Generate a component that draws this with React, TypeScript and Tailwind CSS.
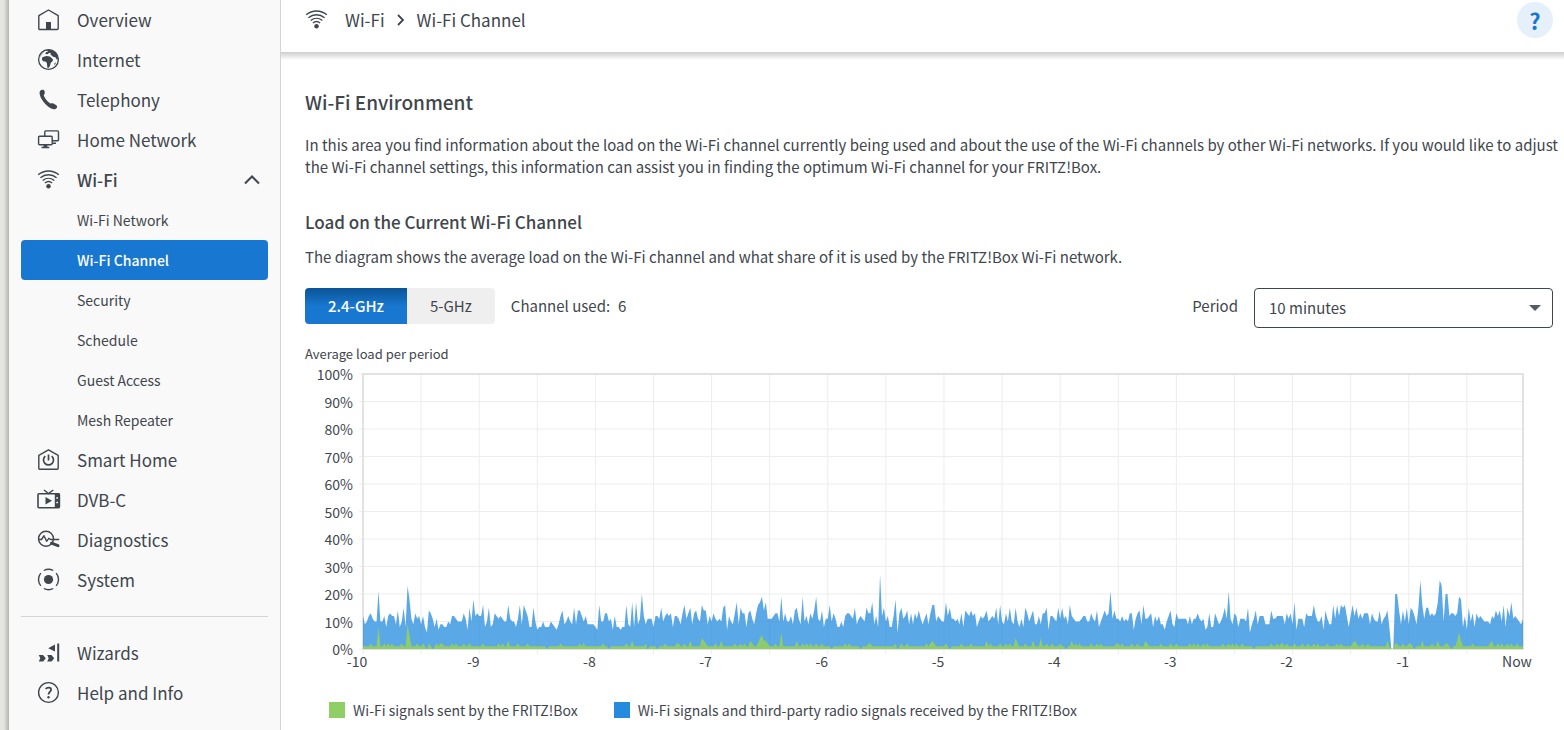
import { useState, type ReactNode } from "react";
import clsx from "clsx";

// Total channel load in percent, one row per minute
const received = [
  [12, 9, 10, 12, 13, 11, 10, 10, 21, 10, 10, 12, 8, 12, 13, 12, 12, 9, 14, 8, 10, 15, 8, 23, 18, 11, 9, 13, 11, 12, 9, 12, 8, 6, 14, 13, 11, 8, 11, 7, 9, 9, 8, 8, 10, 9, 12, 12, 11, 10, 10, 10, 13, 11, 7, 15, 10, 18, 12, 13],
  [12, 12, 16, 8, 10, 15, 8, 9, 13, 12, 11, 12, 11, 10, 10, 16, 11, 10, 10, 8, 11, 16, 9, 16, 14, 12, 8, 8, 15, 10, 7, 8, 8, 10, 8, 8, 8, 10, 9, 8, 7, 9, 12, 14, 9, 10, 12, 10, 9, 15, 9, 14, 14, 12, 10, 12, 9, 9, 9, 9],
  [8, 7, 16, 10, 10, 13, 13, 10, 11, 7, 12, 8, 8, 7, 8, 8, 16, 9, 8, 17, 8, 17, 9, 11, 20, 12, 9, 11, 11, 11, 8, 12, 12, 11, 15, 10, 12, 13, 12, 13, 8, 12, 12, 11, 9, 13, 16, 11, 13, 15, 9, 13, 14, 11, 10, 16, 14, 14, 9, 12],
  [10, 13, 11, 10, 11, 10, 15, 16, 7, 12, 10, 9, 13, 17, 9, 15, 13, 13, 8, 13, 14, 11, 9, 13, 16, 17, 19, 14, 17, 11, 11, 11, 12, 13, 13, 10, 19, 10, 13, 10, 10, 12, 9, 14, 15, 11, 9, 19, 10, 12, 9, 13, 11, 14, 19, 11, 10, 14, 8, 11],
  [11, 16, 10, 13, 11, 8, 8, 10, 8, 12, 13, 13, 12, 11, 15, 9, 11, 12, 11, 10, 15, 13, 13, 17, 9, 12, 8, 27, 12, 15, 10, 12, 8, 8, 12, 18, 6, 13, 15, 11, 12, 14, 9, 13, 9, 13, 11, 14, 11, 9, 11, 13, 9, 13, 16, 16, 10, 12, 11, 10],
  [10, 17, 12, 15, 11, 11, 10, 11, 9, 13, 8, 14, 13, 12, 14, 12, 13, 8, 10, 12, 11, 12, 14, 10, 11, 12, 11, 15, 9, 16, 10, 9, 13, 10, 15, 10, 9, 15, 10, 8, 11, 8, 15, 13, 10, 12, 14, 9, 9, 12, 9, 13, 13, 15, 7, 12, 12, 11, 10, 15],
  [11, 15, 11, 12, 9, 16, 12, 11, 10, 10, 10, 11, 12, 12, 10, 10, 13, 11, 10, 14, 8, 10, 12, 14, 12, 13, 21, 11, 14, 11, 11, 10, 12, 10, 11, 10, 13, 13, 7, 11, 13, 14, 9, 16, 11, 11, 12, 13, 8, 12, 10, 12, 9, 9, 7, 10, 12, 14, 9, 8],
  [13, 11, 11, 11, 11, 11, 9, 12, 9, 11, 11, 13, 11, 10, 11, 7, 8, 13, 8, 8, 13, 11, 9, 10, 12, 15, 11, 21, 11, 9, 13, 12, 8, 11, 11, 11, 10, 15, 6, 9, 11, 14, 9, 12, 12, 12, 9, 9, 9, 14, 11, 11, 12, 12, 12, 12, 9, 13, 11, 13],
  [9, 17, 7, 11, 11, 11, 8, 13, 12, 12, 12, 16, 12, 10, 10, 12, 7, 14, 11, 9, 9, 16, 11, 16, 12, 16, 15, 16, 12, 8, 12, 16, 12, 15, 11, 13, 11, 13, 13, 13, 9, 13, 11, 10, 10, 14, 9, 11, 12, 14, 8, 0, 0, 20, 20, 14, 9, 14, 10, 15],
  [9, 15, 14, 12, 9, 15, 25, 16, 11, 15, 15, 12, 13, 12, 13, 17, 25, 23, 10, 20, 20, 12, 13, 13, 12, 13, 19, 18, 8, 12, 7, 15, 10, 13, 8, 13, 11, 12, 11, 10, 10, 10, 9, 12, 11, 14, 12, 14, 10, 16, 8, 15, 12, 17, 11, 12, 11, 10, 9, 11],
].flat();

// Seconds in which the box itself sent more than its idle 1%
const sentPeaks: Record<number, number> = {
  8: 8, 23: 9, 24: 5, 75: 3, 139: 3, 169: 3, 175: 4, 176: 3, 185: 3, 200: 3, 205: 4, 206: 5, 207: 3, 208: 3,
  216: 6, 224: 3, 294: 3, 322: 3, 337: 4, 346: 3, 350: 4, 366: 3, 404: 3, 512: 3, 529: 3, 547: 3, 555: 3,
  565: 3, 566: 6, 567: 3, 583: 3,
};
const sentBumps = new Set([
  4, 11, 13, 15, 20, 28, 31, 34, 38, 40, 41, 46, 48, 52, 55, 62, 70, 72, 80, 85, 102, 112, 114, 124, 136, 146,
  156, 162, 163, 166, 177, 182, 192, 195, 197, 201, 204, 209, 213, 227, 229, 231, 234, 237, 249, 251, 261, 262,
  275, 278, 281, 291, 293, 295, 301, 309, 314, 324, 329, 332, 334, 338, 342, 353, 356, 360, 368, 370, 376, 379,
  381, 389, 390, 392, 397, 400, 405, 412, 417, 420, 427, 429, 431, 434, 436, 444, 447, 449, 451, 454, 469, 472,
  474, 475, 477, 481, 485, 488, 491, 493, 498, 503, 505, 511, 513, 516, 519, 533, 534, 537, 540, 541, 552, 559,
  560, 573, 582, 586, 588, 591, 593, 596,
]);
const sentPauses = new Set([33, 36, 95, 127, 147, 152, 242, 257, 276, 303, 363, 460, 531, 532, 543, 562]);

const sent = received.map((_, second) => {
  if (sentPauses.has(second)) return 0;
  return sentPeaks[second] ?? (sentBumps.has(second) ? 2 : 1);
});

const toArea = (values: number[]) =>
  `M0,100 ${values.map((value, i) => `L${i},${100 - value}`).join(" ")} L${values.length - 1},100 Z`;

const percentages = [100, 90, 80, 70, 60, 50, 40, 30, 20, 10, 0];
const minutes = ["-10", "-9", "-8", "-7", "-6", "-5", "-4", "-3", "-2", "-1", "Now"];

const Icon = ({ children }: { children: ReactNode }) => (
  <svg
    viewBox="0 0 24 24"
    className="size-6 shrink-0"
    fill="none"
    stroke="currentColor"
    strokeWidth="1.4"
    aria-hidden="true">
    {children}
  </svg>
);

const HomeIcon = () => (
  <Icon>
    <path d="M1.800 7.600 11.500 2l9.700 5.600V20.500a1 1 0 0 1-1 1H2.800a1 1 0 0 1-1-1Z" strokeLinejoin="round" />
    <path d="M9 21.500V14h5v7.500Z" fill="currentColor" stroke="none" />
  </Icon>
);

const GlobeIcon = () => (
  <Icon>
    <circle cx="11.500" cy="11.500" r="9.900" strokeWidth="1.300" />
    <g fill="currentColor" stroke="none" transform="translate(-.5 -.5)">
      <path d="M2.500 9C4 5 7.500 2.300 11.500 2c-1 1.200-3 1.400-3.800 2.600L6 6.500 4.500 9.500Z" opacity=".25" />
      <path d="M8.200 3.200 12 2l4 .8 3.200 2.500 2 3.700.6 3-1.700-.2-1.300-2-2.300-.5-2.500-2.400.2-1.600-2 .4-1.200 1-2.200-.3.600-1.600 1.700-.6.400-1Z" />
      <path d="M7.200 9.300 10 8.600l3.300.4 1.500 1.200 1.700 1.800-.300 1.500-2 2-.8 3.200-1.600 1.900-1-.6-.3-3.700-.9-2-3-.6-1.300-1.900.4-1.800Z" />
      <path d="m17.700 16.300 1.300-1.500.2 1-1 1.900Z" />
    </g>
  </Icon>
);

const PhoneIcon = () => (
  <Icon>
    <path
      d="M3.200 2.800c.9-1 2.800-1.400 3.800-.6.800.8 1 2.500.6 3.500-.3.700-1 .9-.8 1.900.7 2.500 3.700 6.200 6.200 7.700.9.500 1.500-.1 2.300 0 1.300.200 3.600 1.500 4.700 2.600.7 1-.8 3-2.200 3.300-2 .4-4.300-.8-6.100-2.200C7.800 16 4 11.300 2.800 6.700c-.300-1.300-.300-3.100.4-3.900Z"
      fill="currentColor"
      stroke="none"
    />
  </Icon>
);

const NetworkIcon = () => (
  <Icon>
    <rect x="1.600" y="8.200" width="13.600" height="8.600" rx="1" />
    <path d="M7.800 8V3.900a1 1 0 0 1 1-1h11.700a1 1 0 0 1 1 1v7.800a1 1 0 0 1-1 1h-5.200" />
    <path d="M4.500 19.600h7.800M15.200 15.300h3.800" strokeWidth="1.500" />
    <path d="M6.500 17h3.800v2.300H6.500z" fill="currentColor" stroke="none" />
  </Icon>
);

const WifiIcon = () => (
  <Icon>
    <path d="M1.200 6.800c6-5 14.600-5 20.600 0M3.400 9.800c4.800-4 11.400-4 16.200 0M5.700 12.500c3.500-2.900 8.100-2.900 11.600 0M7.900 15c2.200-1.800 5-1.800 7.200 0" />
    <circle cx="11.500" cy="18.300" r="2.200" fill="currentColor" stroke="none" />
  </Icon>
);

const SmartHomeIcon = () => (
  <Icon>
    <path d="M1.800 7.300 11.500 1.800l9.700 5.500V20.300a1 1 0 0 1-1 1H2.800a1 1 0 0 1-1-1Z" strokeLinejoin="round" />
    <path d="M11.500 6.500v6M8.300 8.100a5 5 0 1 0 6.400 0" strokeWidth="1.700" />
  </Icon>
);

const TvIcon = () => (
  <Icon>
    <rect x="1" y="5.700" width="21.400" height="14" rx="1" strokeWidth="1.600" />
    <path d="M7 2 11.500 5.500 16.300 2" />
    <path d="M17.800 5.500h4.800v14h-4.800zM8.500 9v7.500l6.500-3.750Z" fill="currentColor" stroke="none" />
    <path d="M19.300 10h1.700M19.300 14.500h1.700" stroke="#f9f9f9" strokeWidth="1.700" />
  </Icon>
);

const DiagnosticsIcon = () => (
  <Icon>
    <circle cx="9" cy="10.700" r="7.500" />
    <path d="M1.500 11.500h3L7 7.700l2.600 5.600 2.200-3 1.600 1.200H22.200" strokeLinejoin="round" />
    <path d="m14.500 15.200 6.500 2.500" strokeWidth="3" strokeLinecap="round" />
  </Icon>
);

const SystemIcon = () => (
  <Icon>
    <circle cx="11.500" cy="11.500" r="4.600" fill="currentColor" stroke="none" />
    <path d="M6.800 2.500a10 10 0 0 1 9.400 0M6.800 20.500a10 10 0 0 0 9.400 0M3.800 5.100a10 10 0 0 0 0 12.800M19.200 5.100a10 10 0 0 1 0 12.800" />
  </Icon>
);

const WizardIcon = () => (
  <Icon>
    <path d="M21.200 2.500v18" strokeWidth="2" />
    <path
      d="M18 3.500v7L11.200 7.200ZM1.800 14H6l2.800 3.300L6.200 20.500H1.800l1.500-3.200ZM10.200 14h4.200l2.800 3.300-2.600 3.200h-4.400l1.500-3.200Z"
      fill="currentColor"
      stroke="none"
    />
  </Icon>
);

const HelpIcon = () => (
  <Icon>
    <circle cx="11.500" cy="11.500" r="9.900" />
    <path d="M8.700 7.900c1.200-1.700 5.400-1.900 5.400.9 0 2-2.600 2.300-2.600 4.600" strokeWidth="1.800" />
    <circle cx="11.500" cy="16.300" r="1.200" fill="currentColor" stroke="none" />
  </Icon>
);

const wifiPages = ["Wi-Fi Network", "Wi-Fi Channel", "Security", "Schedule", "Guest Access", "Mesh Repeater"];

type NavItemProps = {
  icon: ReactNode;
  label: string;
};

const NavItem = ({ icon, label }: NavItemProps) => (
  <li>
    <a href="#" className="flex h-10 items-center gap-4 px-4 text-[17px] leading-6">
      {icon}
      {label}
    </a>
  </li>
);

const Sidebar = () => {
  const [open, setOpen] = useState(true);
  const [page, setPage] = useState("Wi-Fi Channel");

  return (
    <nav className="w-[272px] shrink-0 border-r border-[#d4d4d4] bg-[#f9f9f9] px-3">
      <ul>
        <NavItem icon={<HomeIcon />} label="Overview" />
        <NavItem icon={<GlobeIcon />} label="Internet" />
        <NavItem icon={<PhoneIcon />} label="Telephony" />
        <NavItem icon={<NetworkIcon />} label="Home Network" />
        <li>
          <button
            onClick={() => setOpen(!open)}
            aria-expanded={open}
            className="flex h-10 w-full items-center gap-4 pr-2 pl-4 text-[17px] leading-6 font-medium">
            <WifiIcon />
            Wi-Fi
            <svg
              viewBox="0 0 16 16"
              className={clsx("ml-auto size-4", !open && "rotate-180")}
              fill="none"
              stroke="currentColor"
              strokeWidth="2"
              aria-hidden="true">
              <path d="m1 11.500 7-7 7 7" />
            </svg>
          </button>
          {open && (
            <ul>
              {wifiPages.map((name) => (
                <li key={name}>
                  <a
                    href="#"
                    onClick={() => setPage(name)}
                    className={clsx(
                      "flex h-10 items-center rounded pl-14 text-sm",
                      name === page && "bg-[#1877d0] font-medium text-white"
                    )}>
                    {name}
                  </a>
                </li>
              ))}
            </ul>
          )}
        </li>
        <NavItem icon={<SmartHomeIcon />} label="Smart Home" />
        <NavItem icon={<TvIcon />} label="DVB-C" />
        <NavItem icon={<DiagnosticsIcon />} label="Diagnostics" />
        <NavItem icon={<SystemIcon />} label="System" />
      </ul>
      <ul className="mt-4 border-t border-[#d4d4d4] pt-4">
        <NavItem icon={<WizardIcon />} label="Wizards" />
        <NavItem icon={<HelpIcon />} label="Help and Info" />
      </ul>
    </nav>
  );
};

const LoadChart = () => (
  <figure>
    <figcaption className="text-[13px] leading-5">Average load per period</figcaption>
    <div className="mr-[30px] flex">
      <div className="-mb-[10px] flex w-12 flex-col justify-between text-right text-sm leading-5">
        {percentages.map((percent) => (
          <span key={percent}>{percent}%</span>
        ))}
      </div>
      <div className="mt-[10px] ml-[10px] min-w-0 flex-1">
        <svg
          viewBox="0 0 599 100"
          preserveAspectRatio="none"
          className="h-[275px] w-full overflow-visible"
          role="img"
          aria-label="Load on the current Wi-Fi channel">
          <g stroke="#ededed">
            {percentages.map((percent) => (
              <line
                key={percent}
                x1="-2"
                x2="599"
                y1={percent}
                y2={percent}
                vectorEffect="non-scaling-stroke"
              />
            ))}
            {Array.from({ length: 20 }, (_, i) => (
              <line key={i} x1={i * 30} x2={i * 30} y1="0" y2="102" vectorEffect="non-scaling-stroke" />
            ))}
          </g>
          <rect
            width="599"
            height="100"
            fill="none"
            stroke="#e2e2e2"
            strokeWidth="2"
            vectorEffect="non-scaling-stroke"
          />
          <path d={toArea(received)} fill="#248bdf" fillOpacity=".75" />
          <path d={toArea(sent)} fill="#90ce66" fillOpacity=".95" />
        </svg>
      </div>
    </div>
    <div className="mt-[2px] mr-9 ml-[52px] flex text-sm leading-5">
      {minutes.map((minute) => (
        <div
          key={minute}
          className={clsx("basis-0", minute === "-1" ? "grow-59" : minute !== "Now" && "grow-60")}>
          <span className="flex w-0 justify-center">{minute}</span>
        </div>
      ))}
    </div>
    <div className="mt-[29px] ml-6 flex gap-9 text-sm leading-5">
      <span className="flex items-center gap-2">
        <i className="size-4 bg-[#90ce66]" />
        Wi-Fi signals sent by the FRITZ!Box
      </span>
      <span className="flex items-center gap-2">
        <i className="size-4 bg-[#248bdf]" />
        Wi-Fi signals and third-party radio signals received by the FRITZ!Box
      </span>
    </div>
  </figure>
);

export default function App() {
  const [band, setBand] = useState("2.4-GHz");

  return (
    <div className="flex min-h-screen bg-white font-['Noto_Sans_CJK_SC',sans-serif] text-[#3f464d]">
      <div className="w-[9px] shrink-0 bg-linear-to-r from-[#e6e5df] from-40% to-[#b4b3ad]" />
      <Sidebar />
      <div className="min-w-0 flex-1">
        <header>
          <div className="flex h-[52px] items-start justify-between pr-[11px] pl-6">
            <div className="flex h-10 items-center text-[17px] leading-6">
              <WifiIcon />
              <a href="#" className="ml-4">
                Wi-Fi
              </a>
              <svg
                viewBox="0 0 12 12"
                className="mx-[10px] size-3"
                fill="none"
                stroke="currentColor"
                strokeWidth="1.800"
                aria-hidden="true">
                <path d="m3 1 5 5-5 5" />
              </svg>
              <span>Wi-Fi Channel</span>
            </div>
            <button
              aria-label="Help"
              className="mt-[2px] flex size-9 items-center justify-center rounded-full bg-[#e6f0fb] text-[22px] leading-6 font-bold text-[#1877d0]">
              ?
            </button>
          </div>
          <div className="h-2 bg-linear-to-b from-[#cecece] to-white" />
        </header>

        <main className="pt-[30px] pr-[11px] pl-6">
          <h1 className="text-[19px] leading-6 font-medium">Wi-Fi Environment</h1>
          <p className="mt-5 -mr-[10px] text-[15px] leading-[22px]">
            In this area you find information about the load on the Wi-Fi channel currently being used and about
            the use of the Wi-Fi channels by other Wi-Fi networks. If you would like to adjust the Wi-Fi channel
            settings, this information can assist you in finding the optimum Wi-Fi channel for your FRITZ!Box.
          </p>
          <h2 className="mt-8 text-[17px] leading-6 font-medium">Load on the Current Wi-Fi Channel</h2>
          <p className="mt-3 text-[15px] leading-[22px]">
            The diagram shows the average load on the Wi-Fi channel and what share of it is used by the FRITZ!Box
            Wi-Fi network.
          </p>

          <div className="mt-5 flex items-start text-[15px]">
            <div className="flex overflow-hidden rounded">
              {["2.4-GHz", "5-GHz"].map((name) => (
                <button
                  key={name}
                  onClick={() => setBand(name)}
                  className={clsx(
                    "h-9 px-[23px]",
                    band === name
                      ? "bg-linear-to-b from-[#0a5496] to-[#1877d0] to-50% font-medium text-white"
                      : "bg-[#efefef]"
                  )}>
                  {name}
                </button>
              ))}
            </div>
            <p className="ml-4 flex h-9 items-center gap-2">
              <span>Channel used:</span>
              <span>6</span>
            </p>
            <label htmlFor="period" className="ml-auto flex h-9 items-center">
              Period
            </label>
            <div className="relative ml-4 w-[299px]">
              <select
                id="period"
                className="h-10 w-full appearance-none rounded border border-[#3f464d] bg-white px-[14px]">
                <option>10 minutes</option>
                <option>1 hour</option>
                <option>24 hours</option>
              </select>
              <svg
                viewBox="0 0 12 6"
                className="pointer-events-none absolute top-[17px] right-3 h-[6px] w-3"
                aria-hidden="true">
                <path d="M0 0h12L6 6Z" fill="#555c63" />
              </svg>
            </div>
          </div>

          <div className="mt-4">
            <LoadChart />
          </div>
        </main>
      </div>
    </div>
  );
}
